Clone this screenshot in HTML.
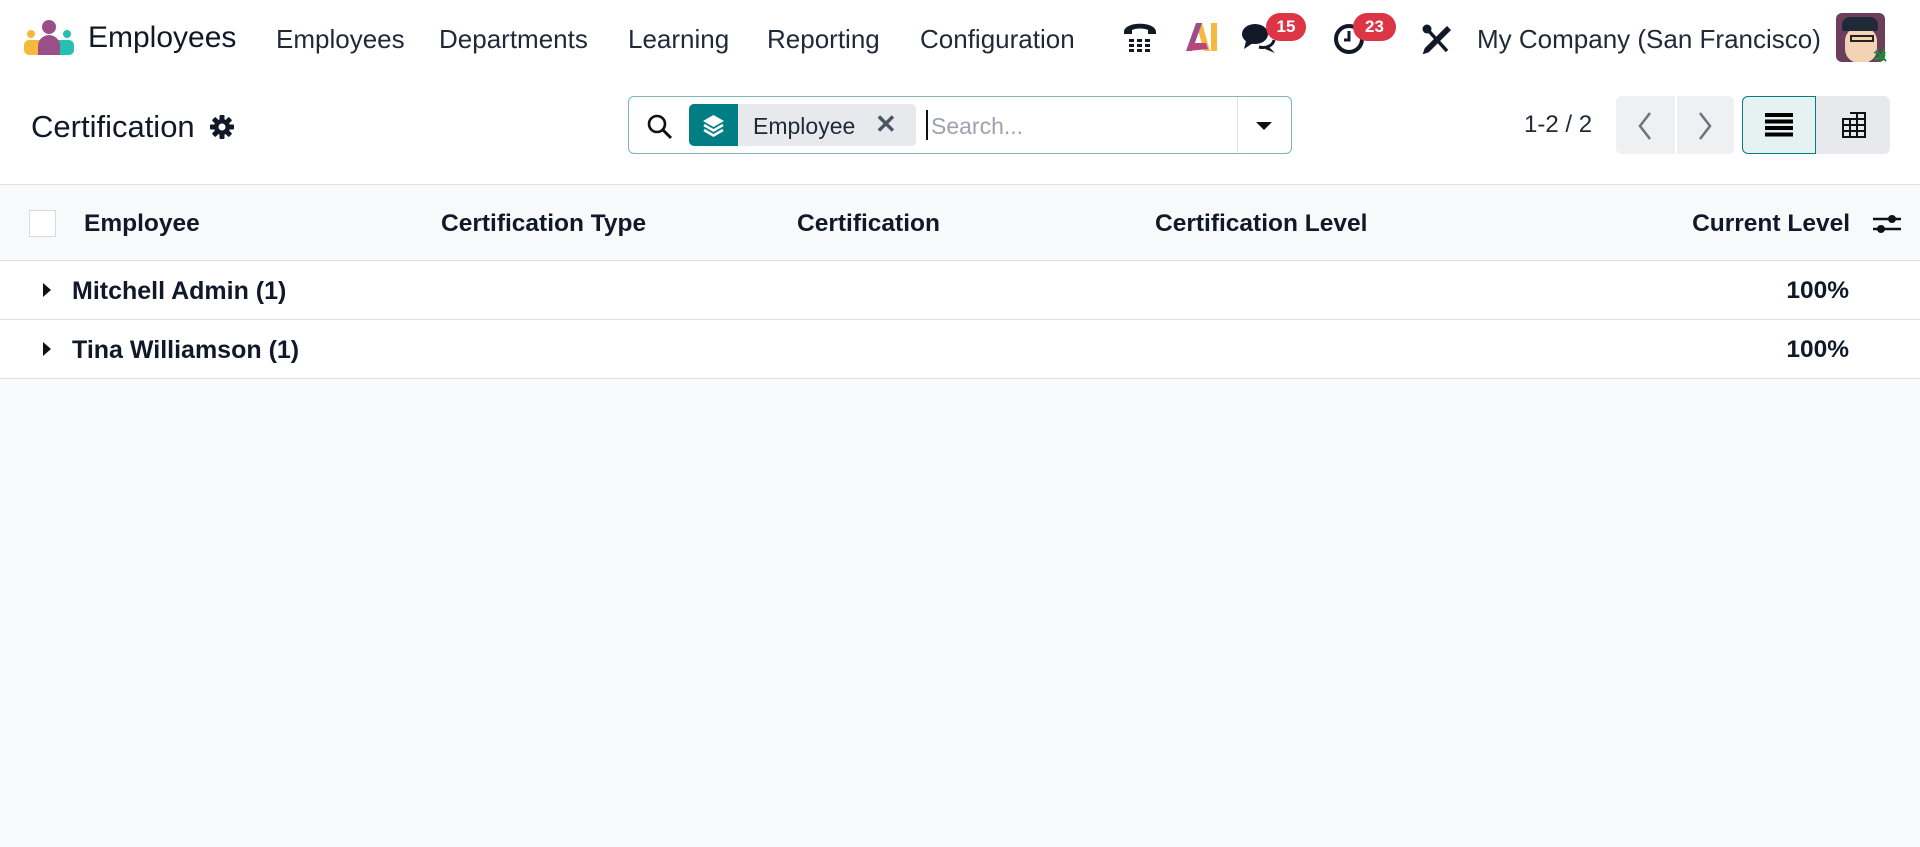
<!DOCTYPE html>
<html><head><meta charset="utf-8"><style>
*{box-sizing:border-box;margin:0;padding:0}
body{width:1920px;height:847px;overflow:hidden;background:#f9fafb;font-family:"Liberation Sans",sans-serif;color:#111827;position:relative}
.abs{position:absolute}
.nav{position:absolute;left:0;top:0;width:1920px;height:78px;background:#fff}
.menu{position:absolute;top:24px;font-size:26px;color:#1f2937;white-space:nowrap}
.cp{position:absolute;left:0;top:78px;width:1920px;height:107px;background:#fff;border-bottom:1px solid #dee2e6}
.badge{position:absolute;background:#dc3545;color:#fff;font-weight:bold;font-size:17px;border-radius:14px;height:28px;line-height:28px;text-align:center}
.thead{position:absolute;left:0;top:185px;width:1920px;height:76px;background:#f8f9fa;border-bottom:1px solid #dee2e6}
.th{position:absolute;top:25px;font-size:24.5px;font-weight:bold;color:#111827;white-space:nowrap}
.row{position:absolute;left:0;width:1920px;height:59px;background:#fff;border-bottom:1px solid #dee2e6}
.row .n{position:absolute;left:72px;top:16px;font-size:25px;font-weight:bold;white-space:nowrap}
.row .p{position:absolute;right:71px;top:16px;font-size:24.5px;font-weight:bold}
.row .tri{position:absolute;left:43px;top:22px;width:0;height:0;border-left:8px solid #111;border-top:7px solid transparent;border-bottom:7px solid transparent}
</style></head><body>
<div class="nav">
  <svg class="abs" style="left:24px;top:20px" width="50" height="36" viewBox="0 0 50 36">
    <circle cx="25" cy="7" r="7" fill="#9b4f87"/>
    <circle cx="7" cy="14" r="4" fill="#f5b93e"/>
    <circle cx="43" cy="14" r="4" fill="#26c0b0"/>
    <rect x="0" y="20" width="20" height="15" rx="5" fill="#f5b93e"/>
    <rect x="30" y="20" width="20" height="15" rx="5" fill="#26c0b0"/>
    <path d="M14 35 V26 a11 11 0 0 1 22 0 V35 Z" fill="#9b4f87"/>
  </svg>
  <div class="menu" style="left:88px;top:21px;font-size:30px;color:#111827">Employees</div>
  <div class="menu" style="left:276px">Employees</div>
  <div class="menu" style="left:439px">Departments</div>
  <div class="menu" style="left:628px">Learning</div>
  <div class="menu" style="left:767px">Reporting</div>
  <div class="menu" style="left:920px">Configuration</div>
  <svg class="abs" style="left:1122px;top:21px" width="36" height="31" viewBox="0 0 36 31">
    <path d="M2 11 C2 0 34 0 34 11 L34 13 L26 13 L26 9 C22 7 14 7 10 9 L10 13 L2 13 Z" fill="#111827"/>
    <g fill="#111827"><rect x="7" y="18" width="5" height="3"/><rect x="15" y="18" width="5" height="3"/><rect x="23" y="18" width="5" height="3"/>
    <rect x="7" y="23" width="5" height="3"/><rect x="15" y="23" width="5" height="3"/><rect x="23" y="23" width="5" height="3"/>
    <rect x="7" y="28" width="5" height="3"/><rect x="15" y="28" width="5" height="3"/><rect x="23" y="28" width="5" height="3"/></g>
  </svg>
  <svg class="abs" style="left:1184px;top:23px" width="34" height="28" viewBox="0 0 34 28">
    <path d="M12 0 L18 0 L26 28 L20 28 Z" fill="#f5b93e"/>
    <path d="M12 0 L18 0 L8 28 L2 28 Z" fill="#9b4f87"/>
    <path d="M5 20 L22 20 L24 26 L4 28 Z" fill="#b6477a"/>
    <rect x="27" y="0" width="6" height="28" fill="#f5b93e"/>
  </svg>
  <svg class="abs" style="left:1241px;top:23px" width="36" height="30" viewBox="0 0 36 30">
    <ellipse cx="14" cy="11" rx="13" ry="10" fill="#111827"/>
    <path d="M5 18 L3 26 L12 20 Z" fill="#111827"/>
    <path d="M18 24 C26 26 32 22 33 17" stroke="#111827" stroke-width="3" fill="none"/>
    <path d="M28 24 L34 30 L24 26Z" fill="#111827"/>
  </svg>
  <div class="badge" style="left:1266px;top:13px;width:40px">15</div>
  <svg class="abs" style="left:1333px;top:23px" width="34" height="34" viewBox="0 0 34 34">
    <circle cx="16" cy="16" r="13" stroke="#111827" stroke-width="4" fill="none"/>
    <path d="M16 8 V17 H11" stroke="#111827" stroke-width="3" fill="none"/>
  </svg>
  <div class="badge" style="left:1353px;top:13px;width:43px">23</div>
  <svg class="abs" style="left:1422px;top:24px" width="30" height="30" viewBox="0 0 30 30">
    <path d="M5 5 L25 27" stroke="#111827" stroke-width="3.5"/>
    <path d="M26 3 L4 25 L3 28 L6 27 L28 5" stroke="#111827" stroke-width="3" fill="none"/>
    <circle cx="5" cy="5" r="4.5" fill="#111827"/>
  </svg>
  <div class="menu" style="left:1477px">My Company (San Francisco)</div>
  <div class="abs" style="left:1836px;top:13px;width:49px;height:49px;border-radius:6px;background:#6b3e5c;overflow:hidden">
    <div class="abs" style="left:9px;top:14px;width:32px;height:36px;border-radius:14px;background:#f4d3b5"></div>
    <div class="abs" style="left:6px;top:4px;width:36px;height:14px;border-radius:8px 8px 2px 2px;background:#1f2937"></div>
    <div class="abs" style="left:14px;top:22px;width:24px;height:7px;border:2px solid #222"></div>
  </div>
  <div class="abs" style="left:1872px;top:44px;color:#1a8b3a;font-size:20px;font-weight:bold;transform:rotate(45deg)">✈</div>
</div>
<div class="cp">
  <div class="abs" style="left:31px;top:31px;font-size:31px;color:#111827">Certification</div>
  <svg class="abs" style="left:210px;top:37px" width="24" height="24" viewBox="0 0 24 24">
    <g fill="#111827"><circle cx="12" cy="12" r="8"/>
    <g id="t"><rect x="9.5" y="0" width="5" height="5" rx="1"/><rect x="9.5" y="19" width="5" height="5" rx="1"/></g>
    <use href="#t" transform="rotate(45 12 12)"/><use href="#t" transform="rotate(90 12 12)"/><use href="#t" transform="rotate(135 12 12)"/></g>
    <circle cx="12" cy="12" r="3.5" fill="#fff"/>
  </svg>
  <div class="abs" style="left:628px;top:18px;width:664px;height:58px;border:1px solid #7fb5b5;border-radius:6px;background:#fff">
    <svg class="abs" style="left:18px;top:17px" width="26" height="26" viewBox="0 0 26 26"><circle cx="10" cy="10" r="8" stroke="#111" stroke-width="2.6" fill="none"/><path d="M16 16 L24 24" stroke="#111" stroke-width="3"/></svg>
    <div class="abs" style="left:60px;top:7px;width:227px;height:42px;background:#e7e9ed;border-radius:5px"></div>
    <div class="abs" style="left:60px;top:7px;width:49px;height:42px;background:#017e84;border-radius:5px 0 0 5px">
      <svg class="abs" style="left:12px;top:9px" width="25" height="25" viewBox="0 0 25 25"><path d="M12.5 2 L23 8 L12.5 14 L2 8Z" fill="#fff"/><path d="M3 12 L12.5 17.5 L22 12" stroke="#fff" stroke-width="2.5" fill="none"/><path d="M3 17 L12.5 22.5 L22 17" stroke="#fff" stroke-width="2.5" fill="none"/></svg>
    </div>
    <div class="abs" style="left:124px;top:16px;font-size:23px;color:#1f2937">Employee</div>
    <div class="abs" style="left:246px;top:12px;font-size:26px;color:#4b5563;font-weight:bold">✕</div>
    <div class="abs" style="left:297px;top:13px;width:2px;height:30px;background:#111"></div>
    <div class="abs" style="left:302px;top:16px;font-size:23px;color:#9ca3af">Search...</div>
    <div class="abs" style="left:608px;top:0;width:1px;height:56px;background:#dee2e6"></div>
    <div class="abs" style="left:627px;top:25px;width:0;height:0;border-top:8px solid #111;border-left:8px solid transparent;border-right:8px solid transparent"></div>
  </div>
  <div class="abs" style="left:1524px;top:33px;font-size:24px;color:#1f2937">1-2 / 2</div>
  <div class="abs" style="left:1616px;top:18px;width:118px;height:58px;background:#eef0f2;border-radius:6px"></div>
  <div class="abs" style="left:1675px;top:18px;width:2px;height:58px;background:#fff"></div>
  <svg class="abs" style="left:1636px;top:33px" width="18" height="30" viewBox="0 0 18 30"><path d="M14 2 L4 15 L14 28" stroke="#6b7280" stroke-width="2.5" fill="none"/></svg>
  <svg class="abs" style="left:1696px;top:33px" width="18" height="30" viewBox="0 0 18 30"><path d="M4 2 L14 15 L4 28" stroke="#6b7280" stroke-width="2.5" fill="none"/></svg>
  <div class="abs" style="left:1742px;top:18px;width:148px;height:58px;background:#e7e9ed;border-radius:6px"></div>
  <div class="abs" style="left:1742px;top:18px;width:74px;height:58px;background:#e6f2f2;border:1px solid #017e84;border-radius:6px 0 0 6px"></div>
  <svg class="abs" style="left:1765px;top:35px" width="28" height="24" viewBox="0 0 28 24"><g fill="#000"><rect y="0" width="28" height="4"/><rect y="6.5" width="28" height="4"/><rect y="13" width="28" height="4"/><rect y="19.5" width="28" height="4"/></g></svg>
  <svg class="abs" style="left:1841px;top:33px" width="26" height="28" viewBox="0 0 26 28"><g stroke="#111" stroke-width="2" fill="none"><rect x="2" y="8" width="22" height="18"/><path d="M2 14 H24 M2 20 H24 M9 8 V26 M16 8 V26 M9 2 H24 V8 M16 2 V8"/></g></svg>
</div>
<div class="thead">
  <div class="abs" style="left:29px;top:25px;width:27px;height:27px;border:1px solid #d8dadd;background:#fff"></div>
  <div class="th" style="left:84px">Employee</div>
  <div class="th" style="left:441px">Certification Type</div>
  <div class="th" style="left:797px">Certification</div>
  <div class="th" style="left:1155px">Certification Level</div>
  <div class="th" style="right:70px">Current Level</div>
  <svg class="abs" style="left:1873px;top:27px" width="28" height="24" viewBox="0 0 28 24"><g stroke="#111" stroke-width="2.5"><path d="M0 7 H28 M0 17 H28"/></g><circle cx="19" cy="7" r="4" fill="#111"/><circle cx="8" cy="17" r="4" fill="#111"/></svg>
</div>
<div class="row" style="top:261px"><div class="tri"></div><div class="n">Mitchell Admin (1)</div><div class="p">100%</div></div>
<div class="row" style="top:320px"><div class="tri"></div><div class="n">Tina Williamson (1)</div><div class="p">100%</div></div>
</body></html>
